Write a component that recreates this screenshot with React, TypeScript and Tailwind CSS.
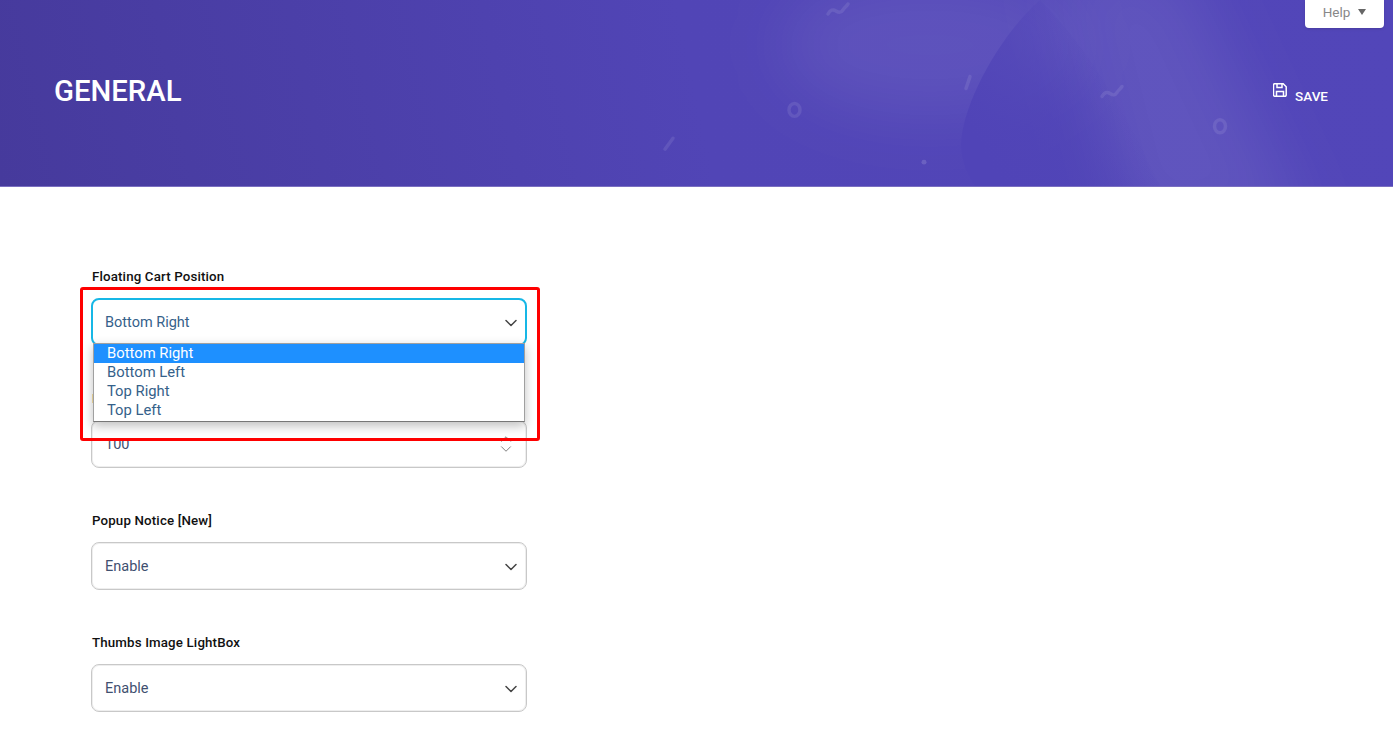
import React from 'react';
import { ChevronDown } from 'lucide-react';

const roboto = { fontFamily: 'Roboto, "Liberation Sans", sans-serif' };

const HeaderArt: React.FC = () => (
  <svg className="absolute inset-0 w-full h-full" viewBox="0 0 1393 187" preserveAspectRatio="none" fill="none">
    <defs>
      <filter id="soft" x="-40%" y="-60%" width="180%" height="220%">
        <feGaussianBlur stdDeviation="32" />
      </filter>
      <filter id="mark">
        <feGaussianBlur stdDeviation="0.7" />
      </filter>
      <linearGradient id="blob" x1="975" y1="140" x2="1105" y2="70" gradientUnits="userSpaceOnUse">
        <stop offset="0" stopColor="#5044b7" stopOpacity="1" />
        <stop offset="0.5" stopColor="#5044b7" stopOpacity="0.65" />
        <stop offset="1" stopColor="#5044b7" stopOpacity="0" />
      </linearGradient>
    </defs>
    <ellipse cx="930" cy="45" rx="150" ry="70" fill="#ffffff" fillOpacity="0.07" filter="url(#soft)" />
    <path d="M1050 -40L1180 -40L1310 240L1120 240Z" fill="#ffffff" fillOpacity="0.08" filter="url(#soft)" />
    <path d="M1040 0C1000 35 962 105 961 145C961 162 968 178 975 187H1160C1130 120 1090 50 1040 0Z" fill="url(#blob)" />
    <g stroke="#ffffff" strokeOpacity="0.09" strokeWidth="3.500" strokeLinecap="round" filter="url(#mark)">
      <ellipse cx="794.500" cy="110.500" rx="5.500" ry="6.500" />
      <ellipse cx="1220" cy="127" rx="5.500" ry="6.500" />
      <path d="M828 14c2-4 5-5 8-3s5 2 7-1c1-2 3-3 5-6" />
      <path d="M1102 97c2-4 5-5 8-3s5 2 7-1c1-2 3-3 5-6" />
      <path d="M966 89l4-12" />
      <path d="M665 150l8-11" />
    </g>
    <circle cx="924" cy="163" r="2.500" fill="#ffffff" fillOpacity="0.14" filter="url(#mark)" />
  </svg>
);

const SaveIcon: React.FC = () => (
  <svg width="14" height="14" viewBox="0 0 14 14" fill="none" stroke="#ffffff" strokeWidth="1.500">
    <path d="M1.500 0.800h8.700l3 3v8.200a1.200 1.200 0 0 1-1.200 1.200H1.500a1.200 1.200 0 0 1-1-1.200V2a1.200 1.200 0 0 1 1-1.200Z" />
    <path d="M4 1v3.500h5V1" />
    <path d="M3.500 13V8.500h7V13" />
  </svg>
);

const Field: React.FC<{ label: string; value: string; focused?: boolean; spin?: boolean }> = ({ label, value, focused, spin }) => (
  <div className="flex flex-col">
    <label className="text-[13.300px] leading-[18px] font-medium tracking-[0.15px] text-[#111111] pl-px mb-3">{label}</label>
    <div
      className={`h-12 w-[436px] rounded-lg flex items-center justify-between pt-0.5 text-[14.500px] ${
        focused
          ? 'border-2 border-[#17b7e6] pl-3 text-[#35618a]'
          : 'border border-[#c8c8c8] shadow-[inset_0_0_0_1px_#eeeeee] pl-[13px] text-[#3f5070]'
      } ${spin ? 'pr-[11px]' : focused ? 'pr-1' : 'pr-[5px]'}`}
    >
      <span>{value}</span>
      {spin ? (
        <span className="flex flex-col items-center text-[#555555] -mt-0.5">
          <ChevronDown size={18} strokeWidth={1} className="rotate-180 -mb-2" />
          <ChevronDown size={18} strokeWidth={1} />
        </span>
      ) : (
        <ChevronDown size={20} strokeWidth={1.800} className="text-[#444444]" />
      )}
    </div>
  </div>
);

export default function App() {
  return (
    <div className="relative h-[756px] w-full bg-white overflow-hidden" style={roboto}>
      <header className="relative h-[187px] bg-[linear-gradient(78deg,#463a9c_0%,#5145b6_50%,#5246b9_100%)] border-b border-[#7a6fc0] flex items-center justify-between pl-[54px] pr-[65px]">
        <HeaderArt />
        <h1 className="relative text-[29.300px] leading-9 font-medium text-white -mt-[5px]">GENERAL</h1>
        <button className="relative flex items-start gap-2 text-white text-[13.500px] font-medium mt-1.5">
          <span className="-mt-[5px]"><SaveIcon /></span>
          <span className="leading-4">SAVE</span>
        </button>
        <div className="absolute top-0 right-[9px] h-7 w-[79px] bg-white rounded-b-[4px] shadow-sm flex items-center justify-center gap-2 pb-1 text-[13.500px] text-[#888888]">
          Help
          <svg width="8" height="6" viewBox="0 0 8 6" className="fill-[#666666]"><path d="M0 0h8L4 6Z" /></svg>
        </div>
      </header>

      <main className="pt-[81px] pl-[91px] flex flex-col gap-11">
        <Field label="Floating Cart Position" value="Bottom Right" focused />
        <Field label="Maximum Quantity" value="100" spin />
        <Field label="Popup Notice [New]" value="Enable" />
        <Field label="Thumbs Image LightBox" value="Enable" />
      </main>

      {/* open options list of the first select */}
      <ul className="absolute left-[93px] top-[343px] w-[432px] bg-white border border-[#a0a0a0] border-b-[#777777] pb-px shadow-[0_4px_10px_rgba(0,0,0,0.25)] text-[14.800px] leading-[19px] text-[#35618a]">
        <li className="bg-[#1e90ff] text-white pl-[13px]">Bottom Right</li>
        <li className="pl-[13px]">Bottom Left</li>
        <li className="pl-[13px]">Top Right</li>
        <li className="pl-[13px]">Top Left</li>
      </ul>

      {/* red annotation */}
      <div className="absolute left-20 top-[287px] w-[460px] h-[154px] border-[3px] border-[#fe0000] rounded-[3px] pointer-events-none" />
    </div>
  );
}
